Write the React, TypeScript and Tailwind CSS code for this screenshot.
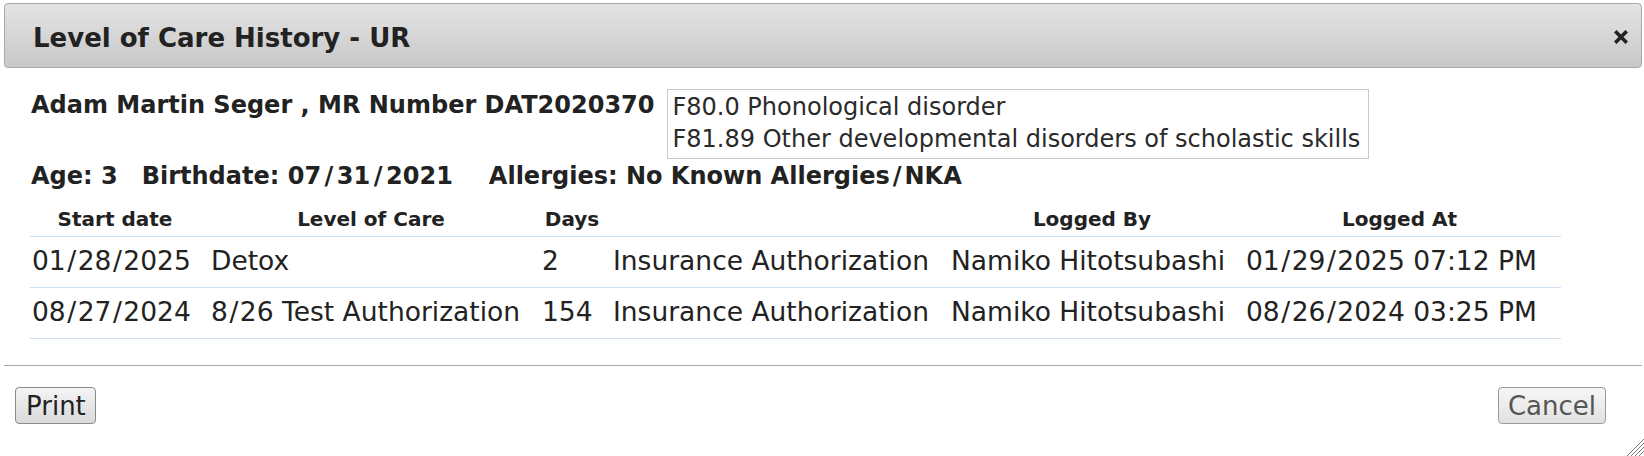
import React from "react";

const rows = [
  ["01/28/2025", "Detox", "2", "Insurance Authorization", "Namiko Hitotsubashi", "01/29/2025 07:12 PM"],
  ["08/27/2024", "8/26 Test Authorization", "154", "Insurance Authorization", "Namiko Hitotsubashi", "08/26/2024 03:25 PM"],
];

const grid = "grid grid-cols-[170px_342px_60px_338px_304px_317px]";
const pads = ["pl-[2px]", "pl-[11px]", "pl-[0px]", "pl-[11px]", "pl-[11px]", "pl-[2px]"];

function Slashed({ text, cls }: { text: string; cls: string }) {
  const parts = text.split("/");
  return (
    <>
      {parts.map((p, i) => (
        <React.Fragment key={i}>
          {i > 0 && <span className={cls}>/</span>}
          {p}
        </React.Fragment>
      ))}
    </>
  );
}

export default function App() {
  return (
    <div className="relative w-[1644px] h-[456px] overflow-hidden bg-white text-[#222] font-['DejaVu_Sans',sans-serif]">
      <div className="ml-[4px] w-[1638px]">
        {/* Title bar */}
        <div className="mt-[3px] h-[65px] rounded-[4px] border border-[#a8a8a8] bg-linear-to-b from-[#e4e4e4] to-[#c8c8c8] flex items-start justify-between pt-[19px] pl-[28px] pr-[13px]">
          <div className="text-[26px] font-bold leading-[30px] whitespace-nowrap">Level of Care History - UR</div>
          <svg width="14" height="14" viewBox="0 0 14 14" className="mt-[7px]">
            <path d="M2.5 2.5 L11.5 11.5 M11.5 2.5 L2.5 11.5" stroke="#222" strokeWidth="3.6" strokeLinecap="square" />
          </svg>
        </div>

        {/* Body */}
        <div className="pl-[26px]">
          <div className="mt-[21px] flex items-start">
            <div className="mt-[2px] ml-[1px] text-[24px] font-bold leading-[28px] whitespace-nowrap">
              Adam Martin Seger , MR Number DAT2020370
            </div>
            <div className="ml-[12px] border border-[#c8c8c8] pl-[5px] pr-[8px] pt-[1px] pb-[3px] text-[24px] leading-[32px] whitespace-nowrap text-[#2a2a2a]">
              <div>F80.0 Phonological disorder</div>
              <div>F81.89 Other developmental disorders of scholastic skills</div>
            </div>
          </div>

          <div className="mt-[3px] ml-[1px] text-[24px] font-bold leading-[28px] whitespace-nowrap flex">
            <span>Age: 3</span>
            <span className="ml-[24px]">
              Birthdate: <Slashed text="07/31/2021" cls="mx-[3.5px]" />
            </span>
            <span className="ml-[36px]">
              Allergies: No Known Allergies<span className="mx-[3px]">/</span>NKA
            </span>
          </div>

          {/* Table */}
          <div className="mt-[17px] w-[1531px]">
            <div className={`${grid} border-b border-[#cfe0f4] pb-[5px] text-[20px] font-bold leading-[24px]`}>
              <div className="text-center">Start date</div>
              <div className="text-center">Level of Care</div>
              <div className="text-center">Days</div>
              <div></div>
              <div className="text-center">Logged By</div>
              <div className="text-center pr-[6px]">Logged At</div>
            </div>
            {rows.map((r, i) => (
              <div key={i} className={`${grid} h-[51px] border-b border-[#cfe0f4] text-[26.5px] leading-[32px] pt-[8px] whitespace-nowrap`}>
                {r.map((c, j) => (
                  <div key={j} className={pads[j]}>
                    <Slashed text={c} cls="mx-[1.5px]" />
                  </div>
                ))}
              </div>
            ))}
          </div>
        </div>

        {/* Separator */}
        <div className="mt-[26px] h-px bg-[#a8a8a8]"></div>

        {/* Buttons */}
        <div className="mt-[21px] flex justify-between pl-[11px] pr-[36px]">
          <button className="h-[37px] rounded-[4px] border border-[#8a8a8a] bg-linear-to-b from-[#f4f4f4] to-[#dadada] pl-[10px] pr-[9px] pt-[2px] text-[26px] leading-[33px] text-[#222]">
            Print
          </button>
          <button className="h-[37px] rounded-[4px] border border-[#9a9a9a] bg-linear-to-b from-[#f6f6f6] to-[#e2e2e2] pl-[9px] pr-[9px] pt-[2px] text-[26px] leading-[33px] text-[#555]">
            Cancel
          </button>
        </div>
      </div>

      {/* Resize grip */}
      <svg className="absolute right-0 bottom-0" width="18" height="20" viewBox="0 0 18 20">
        <path d="M1 20 L18 3 M5 20 L18 7 M9 20 L18 11 M13 20 L18 15" stroke="#777" strokeWidth="1" />
      </svg>
    </div>
  );
}
